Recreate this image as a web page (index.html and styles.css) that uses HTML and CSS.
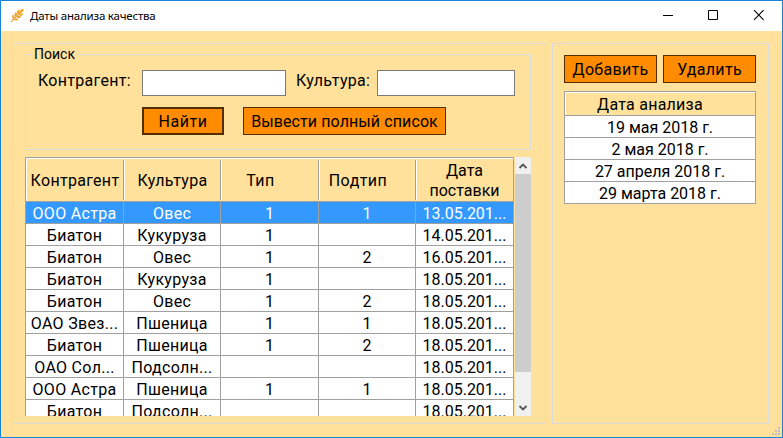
FILE: index.html
```
<!DOCTYPE html>
<html lang="ru">
<head>
<meta charset="utf-8">
<title>Даты анализа качества</title>
<link rel="stylesheet" href="styles.css">
</head>
<body>
<div class="window">
  <header class="titlebar">
    <svg class="logo" width="14" height="14" viewBox="0 0 14 14"><path d="M1 12.8L11 2.5" stroke="#e8962a" stroke-width="1.1"/><g fill="#f5a11c"><ellipse cx="11.8" cy="1.8" rx="2.2" ry="1.2" transform="rotate(-45 11.8 1.8)"/><ellipse cx="8.3" cy="2.8" rx="2.1" ry="1.1" transform="rotate(-70 8.3 2.8)"/><ellipse cx="5.7" cy="5.3" rx="2.1" ry="1.1" transform="rotate(-80 5.7 5.3)"/><ellipse cx="3.3" cy="7.8" rx="2" ry="1.1" transform="rotate(-90 3.3 7.8)"/><ellipse cx="11" cy="5.5" rx="2.1" ry="1.1" transform="rotate(-20 11 5.5)"/><ellipse cx="8.7" cy="8" rx="2.1" ry="1.1" transform="rotate(-10 8.7 8)"/><ellipse cx="6.2" cy="10.5" rx="2" ry="1.1"/></g></svg>
    <span class="title">Даты анализа качества</span>
    <svg class="controls" width="104" height="12" viewBox="0 0 104 12" fill="none" stroke="#000"><path d="M1 6.5h10M46.5 1.5h9v9h-9z"/><path d="M92 1.2l9.6 9.6M101.6 1.2L92 10.8" stroke-width="1.1"/></svg>
  </header>
  <main class="content">
    <section class="panel main-panel">
      <fieldset class="search">
        <legend>Поиск</legend>
        <div class="fields">
          <label class="label-agent" for="agent">Контрагент:</label><input id="agent" class="input-agent" type="text">
          <label class="label-crop" for="crop">Культура:</label><input id="crop" class="input-crop" type="text">
        </div>
        <div class="actions"><button class="btn find">Найти</button><button class="btn all">Вывести полный список</button></div>
      </fieldset>
      <div class="list">
        <div class="grid">
          <div class="row head"><div>Контрагент</div><div>Культура</div><div class="sortable">Тип</div><div class="sortable">Подтип</div><div>Дата<br>поставки</div></div>
          <div class="row selected"><div>ООО Астра</div><div>Овес</div><div>1</div><div>1</div><div>13.05.201...</div></div>
          <div class="row"><div>Биатон</div><div>Кукуруза</div><div>1</div><div></div><div>14.05.201...</div></div>
          <div class="row"><div>Биатон</div><div>Овес</div><div>1</div><div>2</div><div>16.05.201...</div></div>
          <div class="row"><div>Биатон</div><div>Кукуруза</div><div>1</div><div></div><div>18.05.201...</div></div>
          <div class="row"><div>Биатон</div><div>Овес</div><div>1</div><div>2</div><div>18.05.201...</div></div>
          <div class="row"><div>ОАО Звез...</div><div>Пшеница</div><div>1</div><div>1</div><div>18.05.201...</div></div>
          <div class="row"><div>Биатон</div><div>Пшеница</div><div>1</div><div>2</div><div>18.05.201...</div></div>
          <div class="row"><div>ОАО Сол...</div><div>Подсолн...</div><div></div><div></div><div>18.05.201...</div></div>
          <div class="row"><div>ООО Астра</div><div>Пшеница</div><div>1</div><div>1</div><div>18.05.201...</div></div>
          <div class="row"><div>Биатон</div><div>Подсолн...</div><div></div><div></div><div>18.05.201...</div></div>
        </div>
        <div class="scrollbar">
          <svg width="16" height="17" viewBox="0 0 16 17" fill="none" stroke="#555" stroke-width="1.8"><path d="M4.5 11L8 7.5l3.5 3.5"/></svg>
          <div class="thumb"></div>
          <svg width="16" height="17" viewBox="0 0 16 17" fill="none" stroke="#555" stroke-width="1.8"><path d="M4.5 7L8 10.5 11.5 7"/></svg>
        </div>
      </div>
    </section>
    <section class="panel side-panel">
      <div class="side-actions"><button class="btn">Добавить</button><button class="btn">Удалить</button></div>
      <div class="dates">
        <div class="date-head">Дата анализа</div>
        <div>19 мая 2018 г.</div><div>2 мая 2018 г.</div><div>27 апреля 2018 г.</div><div>29 марта 2018 г.</div>
      </div>
    </section>
  </main>
  <svg class="grip" width="8" height="8" viewBox="0 0 8 8" fill="#bfbfbf"><path d="M6 0h2v2H6zM3 3h2v2H3zM6 3h2v2H6zM0 6h2v2H0zM3 6h2v2H3zM6 6h2v2H6z"/></svg>
</div>
</body>
</html>
```
FILE: styles.css
```
* { box-sizing: border-box; }
body { margin: 0; font: 16px/20px Roboto, sans-serif; color: #000; }
.window { position: relative; width: 783px; height: 438px; border: 1px solid #1883d7; background: #ffe19c; overflow: hidden; }
.titlebar { display: flex; align-items: center; height: 30px; padding: 0 16px 0 9px; background: #fff; }
.logo { margin-right: 6px; }
.title { font: 11.5px/16px "Noto Sans", sans-serif; letter-spacing: -0.2px; }
.controls { margin-left: auto; margin-top: -2px; }
.content { display: flex; gap: 6px; padding: 12px; }
.panel { height: 381px; border: 1px solid #dcdcdc; }
.main-panel { width: 533px; padding: 2px 0 0 11px; }
.side-panel { width: 217px; padding: 11px 0 0 11px; }
.search { width: 506px; height: 104px; margin: 0; padding: 0; border: 1px solid #dcdcdc; }
.search legend { height: 16px; margin-left: 6px; padding: 0 2px; font-size: 14px; line-height: 16px; }
.fields { display: flex; align-items: center; height: 26px; margin-top: 8px; padding-left: 12px; }
.fields label { height: 26px; padding-top: 1px; letter-spacing: 0.3px; }
.label-agent { width: 104px; }
.label-crop { width: 81px; margin-left: 10px; }
input { height: 26px; border: 1px solid #7a7a7a; background: #fff; padding: 0; }
.input-agent { width: 144px; }
.input-crop { width: 138px; }
.actions { display: flex; gap: 19px; margin-top: 11px; padding-left: 116px; }
.btn { height: 28px; padding: 2px 0 0; border: 1px solid #522e00; border-radius: 0; background: #ff8c00; color: #000; font: inherit; letter-spacing: 0.3px; white-space: nowrap; }
.find { width: 82px; border-width: 2px; }
.find { letter-spacing: 0.5px; }
.all { width: 203px; letter-spacing: 0.1px; }
.list { display: flex; width: 506px; height: 259px; margin-top: 7px; overflow: hidden; }
.grid { width: 489px; border-top: 1px solid #a0a0a0; border-left: 1px solid #a0a0a0; }
.row { display: grid; grid-template-columns: 98px 97px 98px 97px 98px; height: 22px; background: #fff; }
.row > div { display: flex; align-items: center; justify-content: center; padding-top: 2px; border-right: 1px solid #a0a0a0; border-bottom: 1px solid #a0a0a0; text-align: center; white-space: nowrap; overflow: hidden; }
.row > div:nth-child(-n+2) { letter-spacing: 0.3px; }
.row.head { height: 44px; background: #ffe19c; }
.head > div { border-top: 1px solid #fff; }
.row.head > div:not(:last-child) { border-right: 0; background: linear-gradient(#a0a0a0, #a0a0a0) right 1px / 1px 40px no-repeat; }
.head > div:not(:first-child) { background: linear-gradient(#fff, #fff) left 1px / 1px 40px no-repeat; }
.row.head > div:nth-child(n+2):nth-child(-n+4) { background: linear-gradient(#fff, #fff) left 1px / 1px 40px no-repeat, linear-gradient(#a0a0a0, #a0a0a0) right 1px / 1px 40px no-repeat; }
.head > div:first-child { box-shadow: inset 1px 0 #fff; }
.row.head > .sortable { padding-right: 19px; letter-spacing: 0.5px; }
.row.selected { background: #3399ff; color: #fff; }
.scrollbar { width: 16px; height: 259px; margin-left: 1px; background: #f0f0f0; }
.scrollbar svg { display: block; }
.thumb { height: 198px; background: #cdcdcd; margin-bottom: 27px; }
.side-actions { display: flex; gap: 6px; }
.side-actions .btn { width: 93px; }
.dates { width: 192px; margin-top: 8px; border: 1px solid #a0a0a0; border-bottom: 0; background: #fff; text-align: center; }
.dates > div { height: 22px; padding-top: 1px; line-height: 22px; border-bottom: 1px solid #a0a0a0; }
.dates > .date-head { height: 24px; line-height: 23px; padding-right: 20px; letter-spacing: 0.25px; background: #ffe19c; box-shadow: inset 1px 1px #fff; }
.grip { position: absolute; right: 2px; bottom: 2px; }
```
